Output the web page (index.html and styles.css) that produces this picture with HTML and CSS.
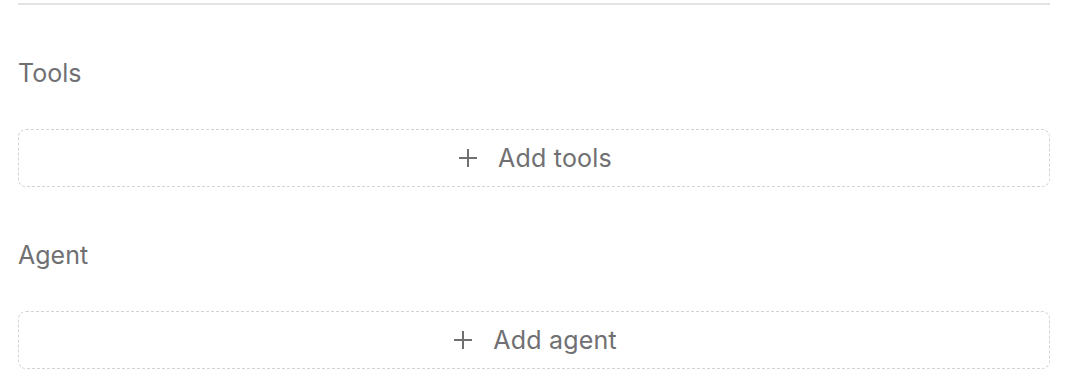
FILE: index.html
```html
<!DOCTYPE html>
<html>
<head>
<meta charset="utf-8">
<link rel="stylesheet" href="styles.css">
</head>
<body>
<div class="panel">
  <div class="divider"></div>
  <section class="section">
    <div class="label">Tools</div>
    <button class="add-btn" type="button">
      <svg class="plus" viewBox="0 0 24 24" width="24" height="24"><path d="M12 3v18M3 12h18" stroke="currentColor" stroke-width="2" fill="none" stroke-linecap="butt"/></svg>
      <span>Add tools</span>
    </button>
  </section>
  <section class="section">
    <div class="label">Agent</div>
    <button class="add-btn" type="button">
      <svg class="plus" viewBox="0 0 24 24" width="24" height="24"><path d="M12 3v18M3 12h18" stroke="currentColor" stroke-width="2" fill="none" stroke-linecap="butt"/></svg>
      <span>Add agent</span>
    </button>
  </section>
</div>
</body>
</html>
```
FILE: styles.css
```css
html, body {
  margin: 0;
  padding: 0;
  background: #ffffff;
}
body {
  font-family: Inter, "Noto Sans", sans-serif;
  color: #707073;
}
.panel {
  padding: 3px 28px 0 18px;
}
.divider {
  height: 2px;
  background: #e3e3e3;
}
.section {
  display: flex;
  flex-direction: column;
}
.divider + .section {
  margin-top: 52px;
}
.section + .section {
  margin-top: 52px;
}
.label {
  font-size: 25px;
  line-height: 32px;
}
.add-btn {
  margin-top: 40px;
  height: 58px;
  box-sizing: border-box;
  border: 1px dashed #d3d3d3;
  border-radius: 8px;
  background: #ffffff;
  display: flex;
  align-items: center;
  justify-content: center;
  gap: 18px;
  font-family: Inter, "Noto Sans", sans-serif;
  font-size: 25px;
  letter-spacing: 0.2px;
  color: #707073;
  padding: 0;
  cursor: pointer;
}
.plus {
  width: 24px;
  height: 24px;
  color: #707073;
  flex: none;
}
```
